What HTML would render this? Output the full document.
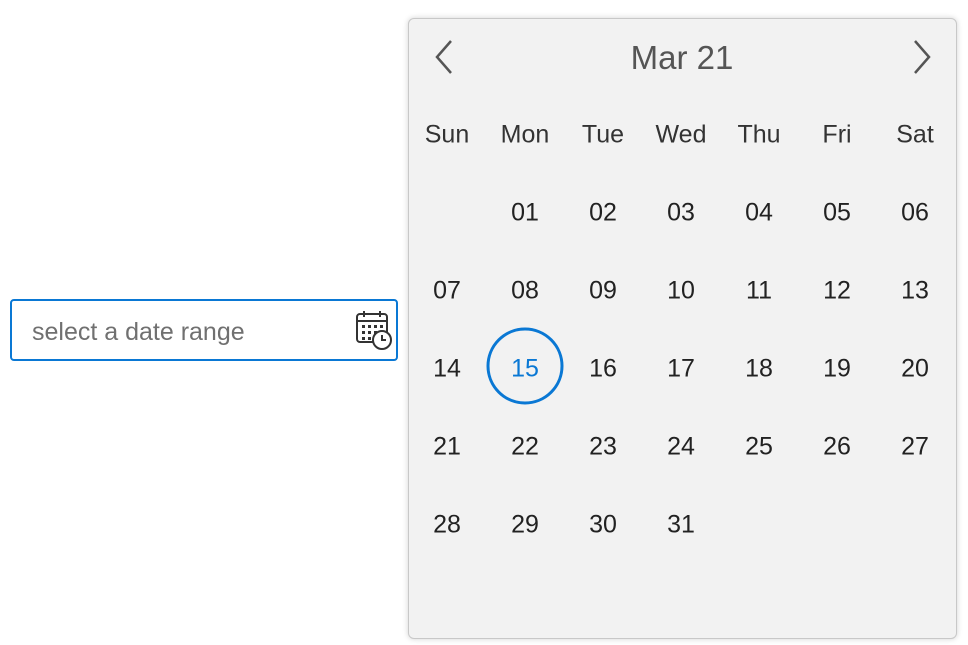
<!DOCTYPE html>
<html><head><style>
body{margin:0;width:968px;height:645px;background:#fff;font-family:"Liberation Sans",sans-serif;position:relative;overflow:hidden}
.inp{position:absolute;left:10px;top:299px;width:384px;height:58px;border:2px solid #0a78d4;border-radius:4px;background:#fff}
.inp span{position:absolute;left:20px;top:17px;font-size:25px;color:#707070}
.pop{position:absolute;left:408px;top:18px;width:547px;height:619px;background:#f2f2f2;border:1px solid #c8c8c8;border-radius:6px;box-shadow:0 0 6px rgba(0,0,0,.18)}
.t{position:absolute;width:78px;text-align:center;font-size:25px;color:#222;transform:translateY(-50%)}
.h{color:#333}
</style></head><body>
<div class="inp"><span>select a date range</span>
<svg style="position:absolute;left:342px;top:9px" width="40" height="40" viewBox="0 0 40 40" fill="none" stroke="#333" stroke-width="2">
<rect x="3" y="4" width="30" height="28" rx="3"/><line x1="3" y1="11" x2="33" y2="11"/><line x1="10" y1="1" x2="10" y2="7"/><line x1="26" y1="1" x2="26" y2="7"/>
<g fill="#333" stroke="none"><rect x="8" y="15" width="3" height="3"/><rect x="14" y="15" width="3" height="3"/><rect x="20" y="15" width="3" height="3"/><rect x="26" y="15" width="3" height="3"/><rect x="8" y="21" width="3" height="3"/><rect x="14" y="21" width="3" height="3"/><rect x="20" y="21" width="3" height="3"/><rect x="8" y="27" width="3" height="3"/><rect x="14" y="27" width="3" height="3"/></g>
<circle cx="28" cy="30" r="9" fill="#fff"/><path d="M28 25v5h4"/></svg>
</div>
<div class="pop">
<svg style="position:absolute;left:24px;top:20px" width="24" height="36"><path d="M18 2L4 18l14 16" fill="none" stroke="#555" stroke-width="2.5"/></svg>
<svg style="position:absolute;left:500px;top:20px" width="24" height="36"><path d="M6 2l14 16L6 34" fill="none" stroke="#555" stroke-width="2.5"/></svg>
<div class="t" style="left:0;width:546px;top:39px;font-size:33px;color:#555">Mar 21</div>
</div>
<svg style="position:absolute;left:486px;top:327px" width="80" height="80"><circle cx="39" cy="39" r="37" fill="none" stroke="#0a78d4" stroke-width="3"/></svg>
<div id="g"></div>
<script>
var d=['Sun','Mon','Tue','Wed','Thu','Fri','Sat'],h='';
d.forEach(function(n,i){h+='<div class="t h" style="left:'+(408+i*78)+'px;top:135px">'+n+'</div>'});
for(var n=1;n<=31;n++){var p=n;var r=Math.floor(p/7),c=p%7;var s=(n<10?'0':'')+n;
h+='<div class="t" style="left:'+(408+c*78)+'px;top:'+(213+r*78)+'px;'+(n==15?'color:#0a78d4':'')+'">'+s+'</div>';}
document.getElementById('g').innerHTML=h;
</script>
</body></html>
